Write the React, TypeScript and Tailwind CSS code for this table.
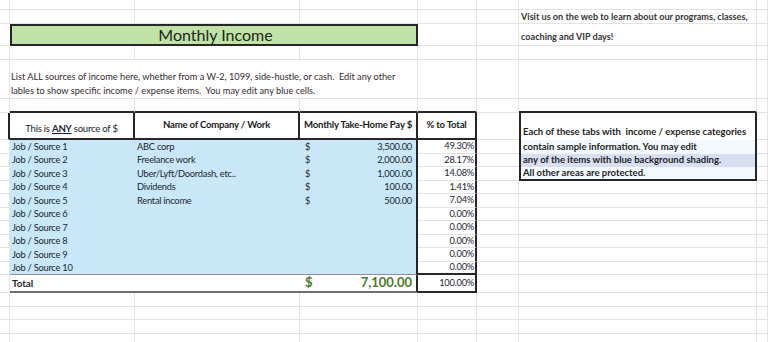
import { twMerge } from "tailwind-merge";
import type { ReactNode } from "react";

const GRID = "border-r border-b border-[#e3e3e3]";

function Cell({
  span = 1,
  cls = "",
  children,
}: {
  span?: number;
  cls?: string;
  children?: ReactNode;
}) {
  return (
    <div
      className={twMerge(GRID, "min-w-0 whitespace-nowrap", span === 3 && "col-span-3", cls)}
    >
      {children}
    </div>
  );
}

const rows = [
  { src: "Job / Source 1", name: "ABC corp", amt: "3,500.00", pct: "49.30%" },
  { src: "Job / Source 2", name: "Freelance work", amt: "2,000.00", pct: "28.17%" },
  { src: "Job / Source 3", name: "Uber/Lyft/Doordash, etc..", amt: "1,000.00", pct: "14.08%" },
  { src: "Job / Source 4", name: "Dividends", amt: "100.00", pct: "1.41%" },
  { src: "Job / Source 5", name: "Rental income", amt: "500.00", pct: "7.04%" },
  { src: "Job / Source 6", name: "", amt: "", pct: "0.00%" },
  { src: "Job / Source 7", name: "", amt: "", pct: "0.00%" },
  { src: "Job / Source 8", name: "", amt: "", pct: "0.00%" },
  { src: "Job / Source 9", name: "", amt: "", pct: "0.00%" },
  { src: "Job / Source 10", name: "", amt: "", pct: "0.00%" },
];

// lines of the note box that sit beside data rows 1-3
const note = [
  { t: "contain sample information. You may edit", bg: "bg-[#f3fafe]" },
  { t: "any of the items with blue background shading.", bg: "bg-[#d7e0f3]" },
  { t: "All other areas are protected.", bg: "bg-[#f3fafe]" },
];

const body = "text-[9.3px] tracking-[-0.25px] text-[#1a2530]";
const head = "font-bold text-[9.6px] tracking-[-0.2px] text-[#1a1a1a]";

function Blank({ n }: { n: number }) {
  return (
    <>
      {Array.from({ length: n }).map((_, i) => (
        <Cell key={i} />
      ))}
    </>
  );
}

export default function App() {
  return (
    <div className="w-[768px] h-[342px] overflow-hidden bg-white font-['Lato',sans-serif]">
      <div className="grid grid-cols-[10px_125px_165px_118px_59px_42px_238px_11px] grid-rows-[10px_14px_22px_14px_39px_14px_27px_repeat(10,13.5px)_18px_repeat(4,13.5px)]">
        {/* row 1 */}
        <Blank n={8} />

        {/* row 2 */}
        <Blank n={6} />
        <Cell cls="flex items-center pl-[2px] font-bold text-[9.1px] text-[#333]">
          Visit us on the web to learn about our programs, classes,
        </Cell>
        <Cell />

        {/* row 3 */}
        <Cell cls="border-r-0" />
        <Cell
          span={3}
          cls="border-2 border-[#262626] bg-[#bfe3a6] flex items-center justify-center pl-[3px] text-[16px] text-[#1a2520]"
        >
          Monthly Income
        </Cell>
        <Cell />
        <Cell />
        <Cell cls="flex items-end pb-[1px] pl-[2px] font-bold text-[9.1px] text-[#333]">
          coaching and VIP days!
        </Cell>
        <Cell />

        {/* row 4 */}
        <Blank n={8} />

        {/* row 5 */}
        <Cell />
        <Cell
          span={3}
          cls="flex flex-col justify-end pl-[1px] leading-[12.5px] text-[9.2px] text-[#322a2c]"
        >
          <span>
            List ALL sources of income here, whether from a W-2, 1099, side-hustle, or cash.&nbsp; Edit any other
          </span>
          <span>
            lables to show specific income / expense items.&nbsp; You may edit any blue cells.
          </span>
        </Cell>
        <Blank n={4} />

        {/* row 6 */}
        <Cell />
        <Cell cls="border-b-2 border-b-[#262626]" />
        <Cell cls="border-b-2 border-b-[#262626]" />
        <Cell cls="border-b-2 border-b-[#262626]" />
        <Cell cls="border-b-2 border-b-[#262626]" />
        <Cell />
        <Cell cls="border-b-2 border-b-[#262626]" />
        <Cell />

        {/* header row */}
        <Cell cls="border-r-2 border-r-[#262626]" />
        <Cell
          cls={twMerge(
            "border-r-2 border-b-2 border-[#262626] flex items-end justify-center pb-[2px]",
            body,
            "text-[9.6px]"
          )}
        >
          <span>
            This is <b className="underline">ANY</b> source of $
          </span>
        </Cell>
        <Cell cls={twMerge("border-r-2 border-b-2 border-[#262626] flex items-center justify-center", head)}>
          Name of Company / Work
        </Cell>
        <Cell cls={twMerge("border-r-2 border-b-2 border-[#262626] flex items-center justify-center", head)}>
          Monthly Take-Home Pay $
        </Cell>
        <Cell cls={twMerge("border-r-2 border-b-2 border-[#262626] flex items-center justify-center", head)}>
          % to Total
        </Cell>
        <Cell cls="border-r-0" />
        <Cell cls="border-x-2 border-b-0 border-[#262626] bg-white flex items-end pl-[2px] pb-[1px] font-bold text-[9.5px] text-[#1d1d1d] whitespace-pre">
          Each of these tabs with  income / expense categories
        </Cell>
        <Cell />

        {/* data rows */}
        {rows.map((r, i) => {
          const last = i === rows.length - 1;
          const n = i < note.length ? note[i] : null;
          const blue = twMerge(
            "border-0 bg-[#c9e7f8] flex items-center",
            body,
            last && "border-b border-b-[#8d8d9b]"
          );
          return (
            <div key={r.src} className="contents">
              <Cell />
              <Cell cls={twMerge(blue, "pl-[2px]")}>{r.src}</Cell>
              <Cell cls={twMerge(blue, "pl-[2px]")}>{r.name}</Cell>
              <Cell
                cls={twMerge(
                  blue,
                  "border-r-2 border-r-[#262626] justify-between pl-[5px] pr-[4px]"
                )}
              >
                <span>{r.amt ? "$" : ""}</span>
                <span>{r.amt}</span>
              </Cell>
              <Cell
                cls={twMerge(
                  "border-r-2 border-r-[#262626] flex items-center justify-end pr-[1px]",
                  body,
                  last && "border-b-2 border-b-[#262626]"
                )}
              >
                {r.pct}
              </Cell>
              <Cell cls={n ? "border-r-0" : ""} />
              {n ? (
                <Cell
                  cls={twMerge(
                    "border-x-2 border-b-0 border-[#262626] flex items-center pl-[2px] font-bold text-[9.5px] text-[#1d1d1d]",
                    n.bg,
                    i === note.length - 1 && "border-b-2"
                  )}
                >
                  {n.t}
                </Cell>
              ) : (
                <Cell />
              )}
              <Cell />
            </div>
          );
        })}

        {/* total row */}
        <Cell />
        <Cell cls="border-r-0 border-b-2 border-b-[#6f6f78] flex items-center pl-[2px] font-bold text-[9.8px] text-[#1d1d1d]">
          Total
        </Cell>
        <Cell cls="border-r-0 border-b-2 border-b-[#6f6f78]" />
        <Cell cls="border-r-2 border-r-[#262626] border-b-2 border-b-[#6f6f78] flex items-center justify-between pl-[5px] pr-[4px] font-bold text-[13px] text-[#4a7b2b]">
          <span>$</span>
          <span>7,100.00</span>
        </Cell>
        <Cell
          cls={twMerge(
            "border-r-2 border-b-2 border-[#262626] flex items-center justify-end pr-[1px]",
            body
          )}
        >
          100.00%
        </Cell>
        <Blank n={3} />

        {/* trailing rows */}
        <Blank n={32} />
      </div>
    </div>
  );
}
